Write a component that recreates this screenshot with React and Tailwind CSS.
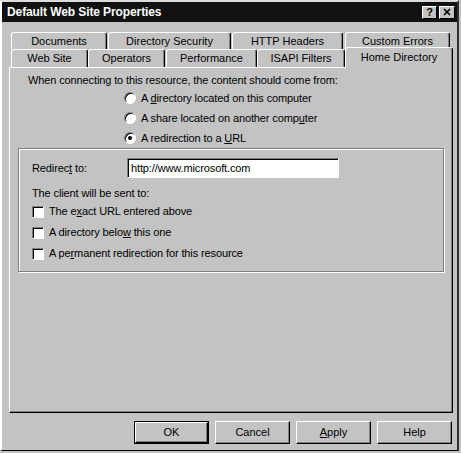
import { X } from "lucide-react"

const tabBase =
    "flex items-center justify-center bg-[#c3c3c3] border-t border-l border-r border-t-white border-l-white border-r-black rounded-t-[3px] shadow-[inset_-1px_0_0_#808080] text-[11px] text-black"

function Tab({ label, className }) {
    return <div className={`${tabBase} ${className}`}>{label}</div>
}

function Radio({ checked, children }) {
    return (
        <div className="h-[20px] flex items-center pl-[114px] gap-[5px]">
            <div className="w-[12px] h-[12px] rounded-full bg-white border border-t-[#808080] border-l-[#808080] border-r-white border-b-white shadow-[inset_1px_1px_0_#000] flex items-center justify-center">
                {checked && <div className="w-[4px] h-[4px] rounded-full bg-black" />}
            </div>
            <span>{children}</span>
        </div>
    )
}

function Check({ children }) {
    return (
        <div className="h-[21px] flex items-center pl-[13px] gap-[5px]">
            <div className="w-[12px] h-[12px] bg-white border border-t-[#808080] border-l-[#808080] border-r-white border-b-white shadow-[inset_1px_1px_0_#000]" />
            <span>{children}</span>
        </div>
    )
}

function Button({ children, isDefault }) {
    return (
        <div className={`w-[75px] h-[23px] ${isDefault ? "border border-black" : ""}`}>
            <div className="w-full h-full flex items-center justify-center border border-t-white border-l-white border-r-black border-b-black shadow-[inset_-1px_-1px_0_#808080] text-[11px] text-black">
                {children}
            </div>
        </div>
    )
}

export default function App() {
    return (
        <div className="w-[461px] h-[453px] bg-[#c3c3c3] font-['Liberation_Sans',Arial,sans-serif]">
            <div className="w-[459px] h-[451px] flex flex-col border-t-2 border-l-2 border-r-2 border-b border-t-[#dcdcdc] border-l-white border-r-[#303030] border-b-black">
                {/* Title bar */}
                <div className="h-[20px] bg-[#111] flex items-center justify-between pl-[5px] pr-[2px]">
                    <span className="text-white font-bold text-[12px] tracking-[-0.1px]">Default Web Site Properties</span>
                    <div className="flex gap-[2px]">
                        <div className="w-[15px] h-[13px] bg-[#c3c3c3] border border-t-white border-l-white border-r-black border-b-black flex items-center justify-center text-[11px] font-bold leading-none text-black">
                            ?
                        </div>
                        <div className="w-[16px] h-[13px] bg-[#c3c3c3] border border-t-white border-l-white border-r-black border-b-black flex items-center justify-center text-black">
                            <X className="w-[10px] h-[10px]" strokeWidth={4} />
                        </div>
                    </div>
                </div>

                {/* Tabs */}
                <div className="mt-[10px] ml-[9px] flex h-[17px]">
                    <Tab label="Documents" className="w-[96px]" />
                    <Tab label="Directory Security" className="w-[123px] ml-[1px]" />
                    <Tab label="HTTP Headers" className="w-[111px] ml-[1px]" />
                    <Tab label="Custom Errors" className="w-[105px] ml-[2px]" />
                </div>
                <div className="ml-[9px] flex h-[18px] items-start">
                    <Tab label="Web Site" className="w-[77px] h-[18px]" />
                    <Tab label="Operators" className="w-[77px] h-[18px]" />
                    <Tab label="Performance" className="w-[91px] h-[18px] ml-[1px]" />
                    <Tab label="ISAPI Filters" className="w-[88px] h-[18px]" />
                    <Tab label="Home Directory" className="w-[108px] h-[22px] -mt-[2px] pb-[3px] relative z-10" />
                </div>

                {/* Panel */}
                <div className="ml-[7px] mr-[4px] h-[346px] bg-[#c3c3c3] border border-t-white border-l-white border-r-black border-b-black shadow-[inset_-1px_-1px_0_#808080] text-[11px] tracking-[-0.12px] text-black">
                    <div className="mt-[4px] pl-[18px] h-[16px] leading-[16px]">
                        When connecting to this resource, the content should come from:
                    </div>
                    <Radio>
                        A <u>d</u>irectory located on this computer
                    </Radio>
                    <Radio>
                        A share located on another comp<u>u</u>ter
                    </Radio>
                    <Radio checked>
                        A redirection to a <u>U</u>RL
                    </Radio>

                    {/* Group box */}
                    <div className="ml-[8px] w-[426px] h-[124px] border border-[#808080] shadow-[inset_1px_1px_0_#fff,1px_1px_0_#fff]">
                        <div className="mt-[9px] h-[20px] flex items-center pl-[13px]">
                            <span className="w-[95px]">
                                Redirec<u>t</u> to:
                            </span>
                            <div className="w-[212px] h-[20px] bg-white border border-t-[#808080] border-l-[#808080] border-r-white border-b-white shadow-[inset_1px_1px_0_#000] flex items-center pl-[3px]">
                                http://www.microsoft.com
                            </div>
                        </div>
                        <div className="mt-[7px] h-[16px] leading-[16px] pl-[13px]">The client will be sent to:</div>
                        <Check>
                            The e<u>x</u>act URL entered above
                        </Check>
                        <Check>
                            A directory belo<u>w</u> this one
                        </Check>
                        <Check>
                            A pe<u>r</u>manent redirection for this resource
                        </Check>
                    </div>
                </div>

                {/* Buttons */}
                <div className="mt-[8px] flex justify-end gap-[6px] pr-[5px]">
                    <Button isDefault>OK</Button>
                    <Button>Cancel</Button>
                    <Button>
                        <u>A</u>pply
                    </Button>
                    <Button>Help</Button>
                </div>
            </div>
        </div>
    )
}
